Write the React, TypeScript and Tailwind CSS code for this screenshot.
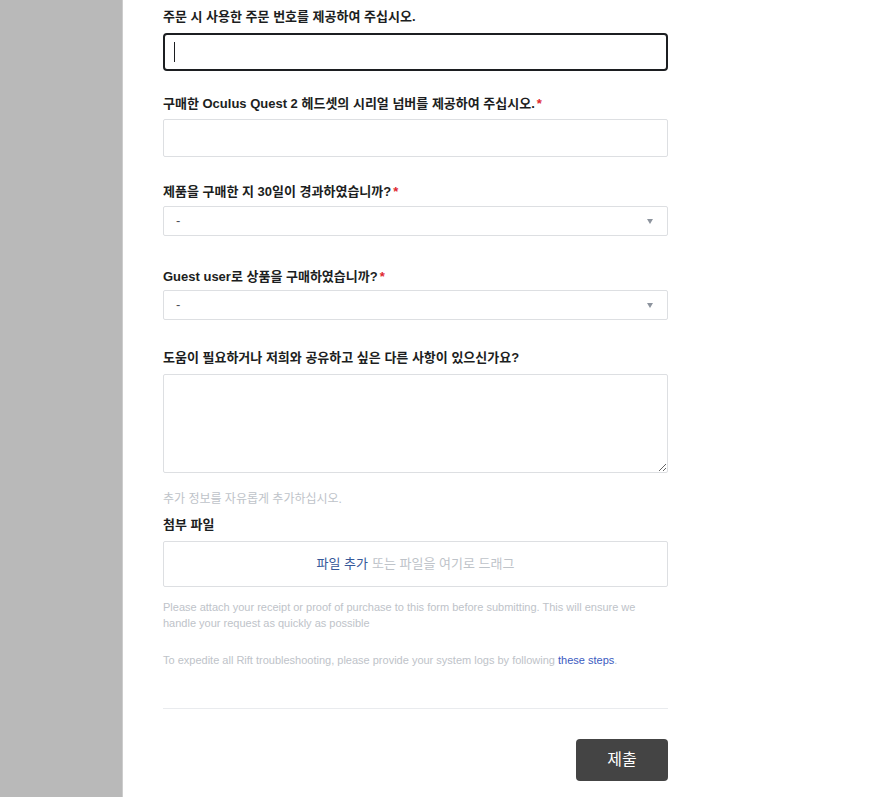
import { useState } from "react";

const font = "font-['Liberation_Sans','Noto_Sans_CJK_KR',sans-serif]";

function Label({ text, required, className }: { text: string; required?: boolean; className: string }) {
  return (
    <label className={`block text-[13px] leading-4 font-bold text-[#1c1e21] ${className}`}>
      {text}
      {required && <span className="text-[#e0282f] ml-[2px]">*</span>}
    </label>
  );
}

function Select({ className }: { className: string }) {
  return (
    <div className={`relative h-[30px] border border-[#dddfe2] rounded-[2px] bg-white flex items-center pl-3 ${className}`}>
      <span className="text-[13px] text-[#4b4f56]">-</span>
      <svg className="absolute right-[14px] top-[12px]" width="6" height="5" viewBox="0 0 6 5">
        <path d="M0 0 H6 L3 5 Z" fill="#8d949e" />
      </svg>
    </div>
  );
}

export default function App() {
  const [orderNo, setOrderNo] = useState("");
  const [serial, setSerial] = useState("");
  const [note, setNote] = useState("");

  return (
    <div className={`min-h-screen flex bg-white ${font}`}>
      <div className="w-[123px] shrink-0 bg-[#b9b9b9] border-r border-[#cdcdcd]" />
      <form className="w-[505px] ml-[40px] pt-[9px] flex flex-col" onSubmit={(e) => e.preventDefault()}>
        <Label text="주문 시 사용한 주문 번호를 제공하여 주십시오." className="mb-2" />
        <div className="h-[38px] border-2 border-[#1c1e21] rounded-[4px] flex items-center pl-[9px]">
          <span className="w-px h-[20px] bg-[#1c1e21]" />
          <input
            className="flex-1 h-full outline-none text-[13px] bg-transparent"
            value={orderNo}
            onChange={(e) => setOrderNo(e.target.value)}
          />
        </div>

        <Label text="구매한 Oculus Quest 2 헤드셋의 시리얼 넘버를 제공하여 주십시오." required className="mt-[25px] mb-[7px]" />
        <input
          className="h-[38px] border border-[#dddfe2] rounded-[2px] outline-none px-3 text-[13px]"
          value={serial}
          onChange={(e) => setSerial(e.target.value)}
        />

        <Label text="제품을 구매한 지 30일이 경과하였습니까?" required className="mt-[27px] mb-[6px]" />
        <Select className="" />

        <Label text="Guest user로 상품을 구매하였습니까?" required className="mt-[33px] mb-[5px]" />
        <Select className="" />

        <Label text="도움이 필요하거나 저희와 공유하고 싶은 다른 사항이 있으신가요?" className="mt-[30px] mb-2" />
        <textarea
          className="h-[99px] border border-[#dddfe2] rounded-[2px] outline-none p-2 text-[13px] resize-y"
          value={note}
          onChange={(e) => setNote(e.target.value)}
        />
        <p className="mt-[18px] text-[12px] leading-4 text-[#bec3c9]">추가 정보를 자유롭게 추가하십시오.</p>

        <Label text="첨부 파일" className="mt-[10px] mb-2" />
        <div className="h-[46px] border border-[#dddfe2] rounded-[2px] flex items-center justify-center text-[13px]">
          <span className="text-[#365899]">파일 추가</span>
          <span className="text-[#bec3c9] ml-1">또는 파일을 여기로 드래그</span>
        </div>

        <p className="mt-[12px] text-[11px] leading-4 text-[#bec3c9]">
          Please attach your receipt or proof of purchase to this form before submitting. This will ensure we handle your request as quickly as possible
        </p>
        <p className="mt-[21px] text-[11px] leading-4 text-[#bec3c9]">
          To expedite all Rift troubleshooting, please provide your system logs by following{" "}
          <a href="#" className="text-[#3b5bbf]">these steps</a>.
        </p>

        <div className="mt-[40px] h-px bg-[#e9ebee]" />

        <div className="mt-[30px] flex justify-end">
          <button type="submit" className="w-[92px] h-[42px] bg-[#444444] rounded-[4px] text-white text-[16px]">
            제출
          </button>
        </div>
      </form>
    </div>
  );
}
